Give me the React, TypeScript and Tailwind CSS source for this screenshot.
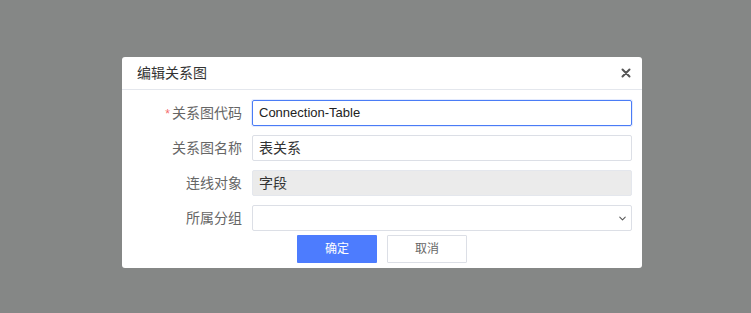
import { ChevronDown } from 'lucide-react';

const font = { fontFamily: '"Liberation Sans", "Noto Sans CJK SC", sans-serif' };

function Row({ label, required, children }: { label: string; required?: boolean; children: React.ReactNode }) {
    return (
        <div className="flex items-center h-[26px]">
            <div className="w-[130px] pr-[10px] text-right text-[14px] text-[#666] leading-none">
                {required && <span className="text-[#f56c6c] mr-[2px] text-[12px]">*</span>}
                {label}
            </div>
            <div className="flex-1 h-full">{children}</div>
        </div>
    );
}

export default function App() {
    return (
        <div className="w-[751px] h-[313px] bg-[#858786] pt-[57px] pl-[122px]" style={font}>
            <div className="w-[520px] h-[211px] bg-white rounded-[3px] flex flex-col">
                {/* Header */}
                <div className="h-[33px] flex items-center justify-between pl-[15px] pr-[11px] border-b border-[#e4e7ed]">
                    <span className="text-[14px] text-[#333]">编辑关系图</span>
                    <svg className="w-[10px] h-[10px] text-[#555]" viewBox="0 0 10 10">
                        <path d="M1.5 1.5 L8.5 8.5 M8.5 1.5 L1.5 8.5" stroke="currentColor" strokeWidth={2} strokeLinecap="round" />
                    </svg>
                </div>

                {/* Form */}
                <div className="flex flex-col gap-[9px] pt-[10px] pr-[10px]">
                    <Row label="关系图代码" required>
                        <div className="h-full border border-[#4a7cf6] rounded-[2px] shadow-[0_0_0_1px_rgba(74,124,246,0.15)] flex items-center px-[6px] text-[13px] text-[#222]">
                            Connection-Table
                        </div>
                    </Row>
                    <Row label="关系图名称">
                        <div className="h-full border border-[#dcdfe6] rounded-[2px] flex items-center px-[6px] text-[14px] text-[#333]">
                            表关系
                        </div>
                    </Row>
                    <Row label="连线对象">
                        <div className="h-full border border-[#e4e7ed] bg-[#ebebeb] rounded-[2px] flex items-center px-[6px] text-[14px] text-[#333]">
                            字段
                        </div>
                    </Row>
                    <Row label="所属分组">
                        <div className="h-full border border-[#dcdfe6] rounded-[2px] flex items-center justify-end pr-[3px]">
                            <ChevronDown className="w-[11px] h-[11px] text-[#555]" strokeWidth={2.2} />
                        </div>
                    </Row>
                </div>

                {/* Buttons */}
                <div className="flex justify-center gap-[10px] mt-[4px]">
                    <button className="w-[80px] h-[28px] bg-[#4d7cfe] text-white text-[12px] rounded-[1px]">确定</button>
                    <button className="w-[80px] h-[28px] bg-white border border-[#dcdfe6] text-[#666] text-[12px] rounded-[1px]">取消</button>
                </div>
            </div>
        </div>
    );
}
